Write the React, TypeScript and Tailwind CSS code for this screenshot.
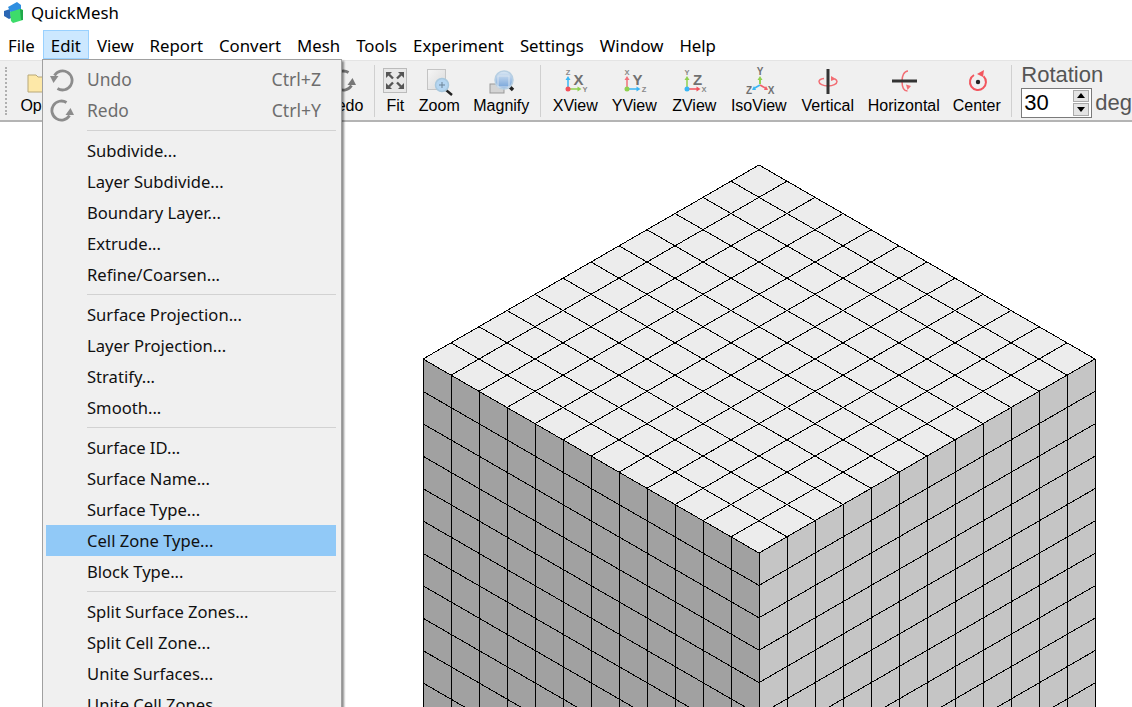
import type { ReactNode } from 'react';

const MENUBAR = ['File', 'Edit', 'View', 'Report', 'Convert', 'Mesh', 'Tools', 'Experiment', 'Settings', 'Window', 'Help'];

// groups of the open Edit menu, split by separators
const EDIT_GROUPS = [
  ['Subdivide...', 'Layer Subdivide...', 'Boundary Layer...', 'Extrude...', 'Refine/Coarsen...'],
  ['Surface Projection...', 'Layer Projection...', 'Stratify...', 'Smooth...'],
  ['Surface ID...', 'Surface Name...', 'Surface Type...', 'Cell Zone Type...', 'Block Type...'],
  ['Split Surface Zones...', 'Split Cell Zone...', 'Unite Surfaces...', 'Unite Cell Zones...'],
];

const CELL_W = 28;
const CELL_H = 194 / 12;
const ROW_H = 32.4;
const APEX_X = 759;
const APEX_Y = 165 - 122; // canvas starts below the toolbar
const LEFT_Y = APEX_Y + 194;

function MeshDrawing() {
  const lines: ReactNode[] = [];
  const n = 12;
  const bottom = 600;
  for (let i = 0; i <= n; i++) {
    // top face
    lines.push(
      <line key={`a${i}`} x1={APEX_X + i * CELL_W} y1={APEX_Y + i * CELL_H} x2={APEX_X + (i - n) * CELL_W} y2={APEX_Y + (i + n) * CELL_H} />,
      <line key={`b${i}`} x1={APEX_X - i * CELL_W} y1={APEX_Y + i * CELL_H} x2={APEX_X + (n - i) * CELL_W} y2={APEX_Y + (i + n) * CELL_H} />,
    );
    // verticals on both sides
    lines.push(
      <line key={`c${i}`} x1={APEX_X - n * CELL_W + i * CELL_W} y1={LEFT_Y + i * CELL_H} x2={APEX_X - n * CELL_W + i * CELL_W} y2={bottom} />,
      <line key={`d${i}`} x1={APEX_X + i * CELL_W} y1={LEFT_Y + (n - i) * CELL_H} x2={APEX_X + i * CELL_W} y2={bottom} />,
    );
  }
  for (let r = 1; r <= 12; r++) {
    const dy = r * ROW_H;
    lines.push(
      <line key={`l${r}`} x1={APEX_X - n * CELL_W} y1={LEFT_Y + dy} x2={APEX_X} y2={LEFT_Y + n * CELL_H + dy} />,
      <line key={`r${r}`} x1={APEX_X} y1={LEFT_Y + n * CELL_H + dy} x2={APEX_X + n * CELL_W} y2={LEFT_Y + dy} />,
    );
  }
  return (
    <svg width="1132" height="585" viewBox="0 0 1132 585" className="block" shapeRendering="crispEdges">
      <polygon points={`${APEX_X},${APEX_Y} ${APEX_X + n * CELL_W},${LEFT_Y} ${APEX_X},${LEFT_Y + 194} ${APEX_X - n * CELL_W},${LEFT_Y}`} fill="#ececec" />
      <polygon points={`${APEX_X - n * CELL_W},${LEFT_Y} ${APEX_X},${LEFT_Y + 194} ${APEX_X},600 ${APEX_X - n * CELL_W},600`} fill="#a1a1a1" />
      <polygon points={`${APEX_X + n * CELL_W},${LEFT_Y} ${APEX_X},${LEFT_Y + 194} ${APEX_X},600 ${APEX_X + n * CELL_W},600`} fill="#c5c5c5" />
      <g stroke="#000" strokeWidth="1">{lines}</g>
    </svg>
  );
}

function Logo() {
  return (
    <svg width="22" height="22" viewBox="0 0 22 22">
      <polygon points="1,9 7,7 8,16 6,17 1,14" fill="#2a66b4" />
      <polygon points="5,5 14,0 18,3 18,8 8,11" fill="#2f8fe0" />
      <polygon points="7,10 17,7 20,8 20,18 10,21 8,19" fill="#3ddc6a" />
      <polygon points="17,7 20,8 20,18 18,18" fill="#20a84a" />
    </svg>
  );
}

function FolderIcon() {
  return (
    <svg width="32" height="30" viewBox="0 0 32 30">
      <path d="M4 9h8l2 2h12v15H4z" fill="#fde8a8" stroke="#b8a878" />
    </svg>
  );
}

function CircleArrow({ redo, color = '#8c8c8c' }: { redo?: boolean; color?: string }) {
  return (
    <svg width="24" height="24" viewBox="0 0 24 24" style={redo ? { transform: 'rotate(180deg)' } : undefined}>
      <path d="M7.5 20.5A9.5 9.5 0 1 0 4.5 7.5" fill="none" stroke={color} strokeWidth="2.8" />
      <polygon points="0,8 8.5,8 3.5,15" fill={color} />
    </svg>
  );
}

function FitIcon() {
  return (
    <svg width="24" height="25" viewBox="0 0 24 25">
      <rect x="0.5" y="0.5" width="23" height="24" fill="#e8e8e8" stroke="#bbb" />
      <g fill="none" stroke="#555" strokeWidth="2.4">
        <path d="M6 6.5l4 4M18 6.5l-4 4M6 18.5l4-4M18 18.5l-4-4" />
      </g>
      <g fill="#555">
        <polygon points="3,4 9,4 3,10" />
        <polygon points="21,4 15,4 21,10" />
        <polygon points="3,21 9,21 3,15" />
        <polygon points="21,21 15,21 21,15" />
      </g>
    </svg>
  );
}

function ZoomIcon() {
  return (
    <svg width="32" height="30" viewBox="0 0 32 30">
      <defs>
        <linearGradient id="zoomPage" x1="0" y1="0" x2="1" y2="1">
          <stop offset="0" stopColor="#f6f6f6" />
          <stop offset="1" stopColor="#d8d8d8" />
        </linearGradient>
      </defs>
      <rect x="4.5" y="3.5" width="18" height="20" fill="url(#zoomPage)" stroke="#c4c4c4" />
      <line x1="23" y1="24" x2="29" y2="29" stroke="#222" strokeWidth="2.4" />
      <circle cx="19" cy="19" r="6.5" fill="#b5d6f2" stroke="#a8c8de" strokeWidth="1.5" />
      <path d="M16 19h6M19 16v6" stroke="#6b8296" strokeWidth="1" />
    </svg>
  );
}

function MagnifyIcon() {
  return (
    <svg width="32" height="30" viewBox="0 0 32 30">
      <defs>
        <linearGradient id="magLens" x1="0" y1="0" x2="0" y2="1">
          <stop offset="0" stopColor="#dbe8f4" />
          <stop offset="1" stopColor="#6f9fd8" />
        </linearGradient>
      </defs>
      <rect x="5" y="18" width="14" height="9" fill="#d4d4d4" stroke="#999" />
      <line x1="24" y1="20" x2="28" y2="24" stroke="#222" strokeWidth="3.4" />
      <circle cx="19" cy="14" r="9" fill="url(#magLens)" stroke="#b7cfe2" strokeWidth="1.5" />
      <rect x="13" y="10" width="11" height="11" fill="none" stroke="#d7e3ef" />
    </svg>
  );
}

function AxisIcon(props: { up: string; right: string; origin: string; big: string; top: string; side: string }) {
  return (
    <svg width="32" height="30" viewBox="0 0 32 30" fontFamily="'Liberation Sans', sans-serif">
      <line x1="9" y1="23" x2="9" y2="13" stroke={props.up} strokeWidth="1.5" />
      <polygon points="9,10 6.5,14 11.5,14" fill={props.up} />
      <line x1="9" y1="23" x2="20" y2="23" stroke={props.right} strokeWidth="1.5" />
      <polygon points="22.5,23 18.5,20.5 18.5,25.5" fill={props.right} />
      <circle cx="9" cy="23" r="2.5" fill={props.origin} />
      <text x="9" y="9" fontSize="7.5" fontWeight="700" fill="#888" textAnchor="middle">{props.top}</text>
      <text x="19.5" y="18.5" fontSize="15" fontWeight="700" fill="#707070" textAnchor="middle">{props.big}</text>
      <text x="26" y="26" fontSize="7.5" fontWeight="700" fill="#888" textAnchor="middle">{props.side}</text>
    </svg>
  );
}

function IsoIcon() {
  return (
    <svg width="32" height="30" viewBox="0 0 32 30" fontFamily="'Liberation Sans', sans-serif">
      <line x1="17" y1="12" x2="17" y2="18" stroke="#8fd14f" strokeWidth="2" />
      <polygon points="17,10 14.5,14 19.5,14" fill="#8fd14f" />
      <line x1="17" y1="19" x2="10" y2="23" stroke="#38b6f5" strokeWidth="1.6" />
      <line x1="17" y1="19" x2="24" y2="23" stroke="#f2606a" strokeWidth="1.6" />
      <polygon points="9,24 11,20 13,24" fill="#38b6f5" />
      <polygon points="25,24 21,24 23,20" fill="#f2606a" />
      <text x="17" y="9" fontSize="10" fontWeight="700" fill="#707070" textAnchor="middle">Y</text>
      <text x="6" y="28" fontSize="10" fontWeight="700" fill="#707070" textAnchor="middle">Z</text>
      <text x="28" y="28" fontSize="10" fontWeight="700" fill="#707070" textAnchor="middle">X</text>
    </svg>
  );
}

function VerticalIcon() {
  return (
    <svg width="32" height="30" viewBox="0 0 32 30">
      <path d="M12 12.5C8.5 13 7 14 7 15.5C7 18 11 20 16 20C21 20 25 18 25 15.5C25 14.5 24 13.5 22.5 13" fill="none" stroke="#f26d73" strokeWidth="1.5" />
      <line x1="16" y1="3" x2="16" y2="28" stroke="#333" strokeWidth="3" />
      <polygon points="19,10 24,13 19,15" fill="#f26d73" />
    </svg>
  );
}

function HorizontalIcon() {
  return (
    <svg width="32" height="30" viewBox="0 0 32 30">
      <path d="M20 5C16 5 14 10 14 15C14 21 16 25 19.5 25" fill="none" stroke="#f26d73" strokeWidth="1.5" />
      <line x1="4" y1="15" x2="29" y2="15" stroke="#333" strokeWidth="3" />
      <polygon points="18,18.5 23,20 19.5,24" fill="#f26d73" />
    </svg>
  );
}

function CenterIcon() {
  return (
    <svg width="32" height="30" viewBox="0 0 32 30">
      <path d="M22.5 10.2A8 8 0 1 1 13 9" fill="none" stroke="#f2565e" strokeWidth="2" />
      <polygon points="16,8 23,4 22,11" fill="#f2565e" />
      <circle cx="17" cy="16" r="2.2" fill="#222" />
    </svg>
  );
}

function ToolButton({ label, width, children }: { label: string; width: string; children: ReactNode }) {
  return (
    <div className={`${width} shrink-0 flex flex-col items-center`}>
      <div className="h-[31px] flex items-center justify-center">{children}</div>
      <span className="text-[16px] leading-[20px] text-black whitespace-nowrap">{label}</span>
    </div>
  );
}

function Sep() {
  return <div className="w-px h-[52px] bg-[#d0d0d0] shrink-0" />;
}

function MenuRow({ label, active }: { label: string; active?: boolean }) {
  return (
    <div className={`h-[31px] ml-[3px] mr-[5px] pl-[41px] pt-[2px] flex items-center text-[#101010] ${active ? 'bg-[#91c9f7]' : ''}`}>{label}</div>
  );
}

function MenuDivider() {
  return <div className="h-px bg-[#d2d2d2] ml-[44px] mr-[5px] my-1" />;
}

function EditMenu() {
  return (
    <div className="absolute left-[42px] top-[59px] w-[300px] h-[660px] bg-[#f0f0f0] border border-[#a0a0a0] pt-[4px] shadow-[2px_2px_2px_rgba(0,0,0,0.45)] font-['Noto_Sans',sans-serif] text-[16.6px]">
      <div className="h-[31px] ml-[3px] mr-[5px] flex items-center text-[#6d6d6d]">
        <div className="w-[41px] pl-[4px]"><CircleArrow /></div>
        <span className="text-[17.4px]">Undo</span>
        <span className="ml-auto mr-[15px] text-[17.6px]">Ctrl+Z</span>
      </div>
      <div className="h-[31px] ml-[3px] mr-[5px] flex items-center text-[#6d6d6d]">
        <div className="w-[41px] pl-[4px]"><CircleArrow redo /></div>
        <span className="text-[17.4px]">Redo</span>
        <span className="ml-auto mr-[15px] text-[17.6px]">Ctrl+Y</span>
      </div>
      {EDIT_GROUPS.map((group, i) => (
        <div key={i}>
          <MenuDivider />
          {group.map((label) => (
            <MenuRow key={label} label={label} active={label === 'Cell Zone Type...'} />
          ))}
        </div>
      ))}
    </div>
  );
}

export default function App() {
  return (
    <div className="relative w-[1132px] h-[707px] overflow-hidden bg-white flex flex-col font-['Liberation_Sans',sans-serif]">
      {/* title bar */}
      <div className="h-[30px] shrink-0 flex items-center pl-[3px] pb-[4px] gap-[6px] font-['Noto_Sans',sans-serif] text-[16.8px] text-black">
        <Logo />
        <span>QuickMesh</span>
      </div>

      {/* menu bar */}
      <div className="h-[30px] shrink-0 flex font-['Noto_Sans',sans-serif] text-[16.8px] text-black">
        {MENUBAR.map((m) => (
          <div
            key={m}
            className={`flex items-center pt-[2px] ${m === 'Edit' ? 'bg-[#cce8ff] border border-[#99d1ff] px-[7px] h-[29px]' : 'px-2'}`}
          >
            {m}
          </div>
        ))}
      </div>

      {/* toolbar */}
      <div className="h-[62px] shrink-0 bg-[#f0f0f0] border-t border-[#e4e4e4] border-b-2 border-b-[#b4b4b4] flex items-center pl-[5px] overflow-hidden">
        <div className="w-[2px] h-[48px] shrink-0 border-l-2 border-dotted border-[#b0b0b0] mr-[9px]" />
        <ToolButton label="Open" width="w-[48px]"><FolderIcon /></ToolButton>
        <div className="flex-1" />
        <ToolButton label="Redo" width="w-[46px]"><CircleArrow redo color="#777" /></ToolButton>
        <div className="w-[7px] shrink-0" />
        <Sep />
        <div className="w-[5px] shrink-0" />
        <ToolButton label="Fit" width="w-[30px]"><FitIcon /></ToolButton>
        <ToolButton label="Zoom" width="w-[58px]"><ZoomIcon /></ToolButton>
        <ToolButton label="Magnify" width="w-[66px]"><MagnifyIcon /></ToolButton>
        <div className="w-[6px] shrink-0" />
        <Sep />
        <div className="w-[5px] shrink-0" />
        <ToolButton label="XView" width="w-[58px]">
          <AxisIcon up="#38b6f5" right="#8fd14f" origin="#f2505a" big="X" top="Z" side="Y" />
        </ToolButton>
        <ToolButton label="YView" width="w-[60px]">
          <AxisIcon up="#f2707a" right="#38b6f5" origin="#8fd14f" big="Y" top="X" side="Z" />
        </ToolButton>
        <ToolButton label="ZView" width="w-[60px]">
          <AxisIcon up="#8fd14f" right="#f2505a" origin="#38b6f5" big="Z" top="Y" side="X" />
        </ToolButton>
        <ToolButton label="IsoView" width="w-[69px]"><IsoIcon /></ToolButton>
        <ToolButton label="Vertical" width="w-[69px]"><VerticalIcon /></ToolButton>
        <ToolButton label="Horizontal" width="w-[83px]"><HorizontalIcon /></ToolButton>
        <ToolButton label="Center" width="w-[63px]"><CenterIcon /></ToolButton>
        <div className="w-[3px] shrink-0" />
        <Sep />
        <div className="ml-[9px] shrink-0 flex flex-col text-[#555] text-[22px] leading-[26px] mb-[2px]">
          <span>Rotation</span>
          <div className="flex items-center gap-[3px]">
            <div className="w-[71px] h-[30px] border border-[#7a7a7a] bg-white flex items-center pl-[2px] pr-[2px] text-black text-[22px]">
              <span className="flex-1">30</span>
              <div className="w-[16px] h-[26px] flex flex-col gap-px">
                <div className="flex-1 bg-[#e4e4e4] border border-[#aaa] flex items-center justify-center">
                  <div className="w-0 h-0 border-x-[4px] border-x-transparent border-b-[5px] border-b-black" />
                </div>
                <div className="flex-1 bg-[#e4e4e4] border border-[#aaa] flex items-center justify-center">
                  <div className="w-0 h-0 border-x-[4px] border-x-transparent border-t-[5px] border-t-black" />
                </div>
              </div>
            </div>
            <span>deg</span>
          </div>
        </div>
      </div>

      {/* mesh canvas */}
      <div className="flex-1 min-h-0 overflow-hidden">
        <MeshDrawing />
      </div>

      <EditMenu />
    </div>
  );
}
